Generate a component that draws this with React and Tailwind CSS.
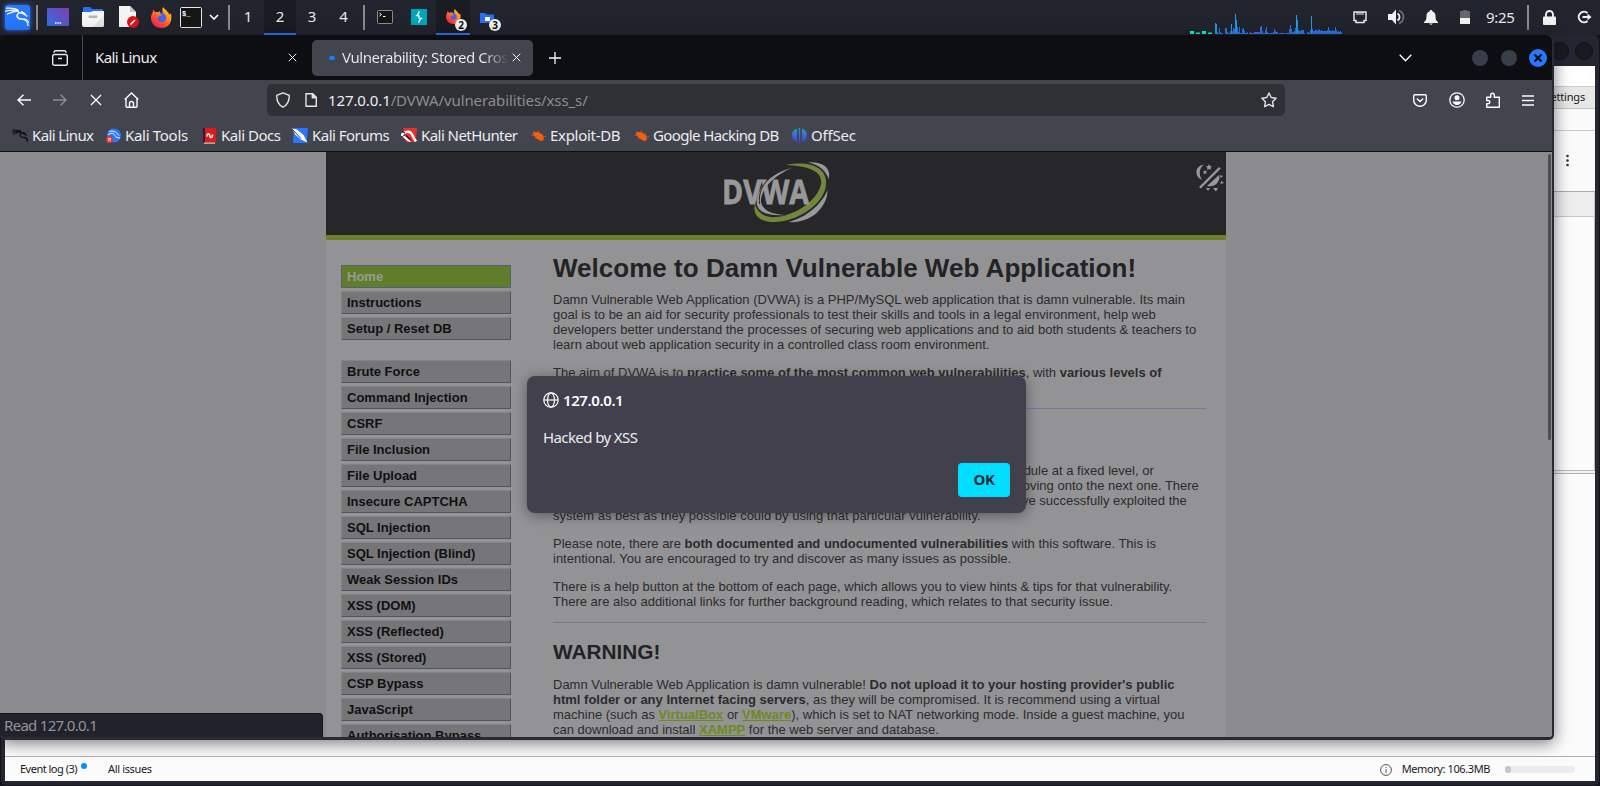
import React from "react";
import { SiBurpsuite, SiKalilinux } from "react-icons/si";

const NAV = [
  ["Home", "Instructions", "Setup / Reset DB"],
  ["Brute Force", "Command Injection", "CSRF", "File Inclusion", "File Upload", "Insecure CAPTCHA", "SQL Injection", "SQL Injection (Blind)", "Weak Session IDs", "XSS (DOM)", "XSS (Reflected)", "XSS (Stored)", "CSP Bypass", "JavaScript", "Authorisation Bypass"],
];

const GRAPH = [11,10,2,1,6,2,1,1,0,0,6,6,2,1,1,3,10,3,6,5,20,14,7,2,7,1,1,5,6,3,1,1,2,0,1,2,1,1,1,2,2,2,2,2,2,7,8,3,1,1,4,7,2,1,1,1,1,1,2,5,3,2,2,0,1,1,1,1,1,1,0,1,1,1,5,9,5,2,2,3,6,19,14,4,3,3,4,4,4,1,0,0,2,2,1,4,18,5,3,3,4,4,3,5,4,3,4,3,3,3,3,3,4,7,4,3,3,4,3,3,7,4,2,3,2,3,2];

function Firefox({ size }) {
  return (
    <svg width={size} height={size} viewBox="0 0 24 24">
      <defs>
        <linearGradient id="fx" x1="1" y1="0" x2="0.2" y2="1">
          <stop offset="0" stopColor="#ffe02e" />
          <stop offset="0.4" stopColor="#ff9322" />
          <stop offset="0.75" stopColor="#ff4338" />
          <stop offset="1" stopColor="#ee1d5c" />
        </linearGradient>
      </defs>
      <circle cx="12" cy="12.500" r="6.500" fill="#4a62e0" />
      <path fill="url(#fx)" d="M14 0c1 2 3 3.200 4.500 5C20 6 20.500 7 20.500 8.500C22 8 22.500 7 22.500 7C25 14 22 24 12 24C4 24 0 18 0 12.500C0 10 1 7 2 6L2.500 3L5 6C6.500 5.500 8 5.500 8.500 5.700L10.500 4.500L10 7.500L12.500 9.500C11 10 9 10 8 11.500C7 13 7 17 12 17.500C15.500 17.500 17.500 15 17.500 12C17.500 10 15.500 8 14 7C12.500 5 12.500 2 14 0Z" />
    </svg>
  );
}

function Sep() {
  return <div className="h-[25px] w-[2px] bg-[#8a8a8d]" />;
}

function TopPanel() {
  return (
    <div className="flex h-[35px] w-full shrink-0 items-center bg-[#22242d] pb-px font-['Noto_Sans',sans-serif] text-[15px] text-[#e6e6e6]">
      <div className="flex w-[36px] justify-center">
        <div className="ml-[-2px] flex h-[25px] w-[25px] items-center justify-center rounded-[3px] bg-[#2777ff] shadow-[0_0_5px_#2777ff]">
          <SiKalilinux className="h-6 w-6 stroke-current stroke-[0.8] text-white" />
        </div>
      </div>
      <Sep />
      <div className="flex w-[40px] justify-center">
        <svg width="22" height="18" viewBox="0 0 22 18">
          <defs><linearGradient id="dk" x1="0" y1="1" x2="1" y2="0"><stop offset="0" stopColor="#2f6fe8" /><stop offset="1" stopColor="#7f3fa8" /></linearGradient></defs>
          <rect width="22" height="18" rx="1" fill="url(#dk)" />
          <path d="M8 15h1.500M10.300 15h1.500M12.600 15h1.500" stroke="#fff" strokeWidth="1.300" />
        </svg>
      </div>
      <div className="flex w-[30px] justify-center">
        <svg width="22" height="20" viewBox="0 0 22 20">
          <path d="M1 1a1 1 0 0 1 1-1h6l2 2h10a1 1 0 0 1 1 1v5H1z" fill="#2b6ff0" />
          <path d="M0 5h9l2-1h11v14a2 2 0 0 1-2 2H2a2 2 0 0 1-2-2z" fill="#f4f4f4" />
          <path d="M22 8v10a2 2 0 0 1-2 2h-9z" fill="#e4e4e4" />
          <rect x="6.500" y="8.500" width="9" height="2.500" rx="1" fill="#b4b4b4" />
        </svg>
      </div>
      <div className="ml-[6px] flex w-[28px] justify-center">
        <svg width="21" height="22" viewBox="0 0 21 22">
          <path d="M1 0h11l6 6v15H1z" fill="#f4f4f4" /><path d="M12 0l6 6h-6z" fill="#c4c4c4" />
          <circle cx="15" cy="16" r="6" fill="#d9141b" /><path d="M12.500 18.500l4.500-4.500" stroke="#fff" strokeWidth="1.600" />
        </svg>
      </div>
      <div className="ml-[8px] flex w-[22px] justify-center"><Firefox size={21} /></div>
      <svg className="ml-[8px]" width="22" height="21" viewBox="0 0 22 21">
        <rect x="0.500" y="0.500" width="21" height="20" rx="1" fill="#161616" stroke="#e8e8e8" />
        <text x="2" y="9" fontSize="7" fontFamily="Liberation Mono, monospace" fontWeight="bold" fill="#fff">$_</text>
      </svg>
      <svg className="ml-[7px]" width="10" height="6" viewBox="0 0 10 6" fill="none" stroke="#fff" strokeWidth="1.700"><path d="M1 1l4 4 4-4" /></svg>
      <div className="ml-[9px]"><Sep /></div>
      <div className="mb-[-1px] ml-[2px] flex h-[35px] text-center leading-[32px]">
        <div className="w-[32px]">1</div>
        <div className="w-[32px] border-b-2 border-[#2777ff] bg-[#1a1c23]">2</div>
        <div className="w-[32px]">3</div>
        <div className="w-[31px]">4</div>
      </div>
      <div className="ml-[4px]"><Sep /></div>
      <svg className="ml-[12px]" width="16" height="14" viewBox="0 0 16 14">
        <rect x="0.500" y="0.500" width="15" height="13" rx="1" fill="#161616" stroke="#8d8d8d" />
        <path d="M2.500 3l2 1.500-2 1.500M6 6.500h2.500" stroke="#fff" fill="none" />
      </svg>
      <div className="ml-[18px] h-[16px] w-[16px] bg-white">
        <SiBurpsuite className="h-4 w-4 text-[#00a5bd]" />
      </div>
      <div className="relative mb-[-1px] ml-[9px] flex h-[35px] w-[34px] items-center border-b-2 border-[#2777ff] bg-[#1a1c23] pl-[10px]">
        <Firefox size={15} />
        <span className="absolute left-[19px] top-[19px] flex h-[12px] w-[12px] items-center justify-center rounded-full bg-[#f1f1f1] text-[10px] font-bold leading-none text-[#111]">2</span>
      </div>
      <div className="relative mb-[-1px] ml-[10px] flex h-[35px] w-[24px] items-center">
        <svg width="14" height="12" viewBox="0 0 14 12"><path d="M0 1h5l1.500 1.500H14V11H0z" fill="#2b6ff0" /><rect x="5" y="5" width="5" height="4" fill="#fff" /></svg>
        <span className="absolute left-[9px] top-[19px] flex h-[12px] w-[12px] items-center justify-center rounded-full bg-[#f1f1f1] text-[10px] font-bold leading-none text-[#111]">3</span>
      </div>
      <div className="flex-1" />
      <svg width="153" height="34" viewBox="0 0 153 34" shapeRendering="crispEdges">
        <path d="M0 31h4v3h-4zM6 33h4v1h-4zM12 31h4v3h-4zM18 33h4v1h-4z" fill="#00ffd5" />
        <path d="M6 32h4v1h-4zM18 32h4v1h-4z" fill="#118f84" />
        {GRAPH.map((h, i) => (
          <rect key={i} x={25 + i} y={34 - h} width="1" height={h} fill={h > 9 ? "#249ae8" : "#2a78f0"} />
        ))}
      </svg>
      <div className="ml-[10px] flex w-[247px] items-center">
        <svg width="14" height="13" viewBox="0 0 14 13" fill="none" stroke="#e8e8e8" strokeWidth="1.500">
          <path d="M1 1h12v8.500h-2v2H3v-2H1z" /><path d="M4 1v3M6 1v3M8 1v3M10 1v3" strokeWidth="1" />
        </svg>
        <svg className="ml-[21px]" width="17" height="16" viewBox="0 0 17 16" fill="none">
          <path d="M0 5h4l4-4.500v15L4 11H0z" fill="#f0f0f0" />
          <path d="M9.500 4.500a4 4 0 0 1 0 7" stroke="#f0f0f0" strokeWidth="1.800" />
          <path d="M11 1.500a7 7 0 0 1 0 13" stroke="#6c6d73" strokeWidth="1.800" />
        </svg>
        <svg className="ml-[19px]" width="14" height="15" viewBox="0 0 14 15" fill="#f0f0f0"><path d="M7 0c1 0 1.300.7 1.300 1.300C10.500 2 11.500 3.500 11.500 6c0 3 .5 5 2.500 6v1H0v-1c2-1 2.500-3 2.500-6 0-2.500 1-4 3.200-4.700C5.700.7 6 0 7 0zM5 13.500h4L7 15z" /></svg>
        <svg className="ml-[22px]" width="10" height="14" viewBox="0 0 10 14"><path d="M3 0h4v1h3v7H0V1h3z" fill="#66676d" /><path d="M0 8h10v6H0z" fill="#f0f0f0" /></svg>
        <span className="ml-[16px] w-[30px] whitespace-nowrap leading-none tracking-[-0.3px]">9:25</span>
        <div className="ml-[11px]"><Sep /></div>
        <svg className="ml-[14px]" width="13" height="15" viewBox="0 0 13 15"><path d="M3 7V4.500a3.500 3.500 0 0 1 7 0V7" fill="none" stroke="#f0f0f0" strokeWidth="1.900" /><rect y="6.500" width="13" height="8.500" rx="1" fill="#f0f0f0" /></svg>
        <svg className="ml-[21px]" width="15" height="14" viewBox="0 0 15 14" fill="none" stroke="#f0f0f0" strokeWidth="2"><path d="M10.500 3A5.300 5.300 0 1 0 10.500 11M5.500 7H12" /><path d="M10.500 3.500L14.500 7l-4 3.500z" fill="#f0f0f0" stroke="none" /></svg>
      </div>
    </div>
  );
}

function Cross({ size, w = 1.4 }) {
  return <svg width={size} height={size} viewBox="0 0 10 10" fill="none" stroke="#fbfbfe" strokeWidth={w}><path d="M0.800 0.800l8.400 8.400M9.200 0.800L0.800 9.200" /></svg>;
}

function TabBar() {
  return (
    <div className="flex h-[45px] shrink-0 items-center rounded-t-lg bg-[#0d0e12] text-[15px] text-[#ececef]">
      <div className="flex h-full w-[83px] items-center justify-end border-r border-[#4b4c52] pr-[14px]">
        <svg width="16" height="16" viewBox="0 0 16 16" fill="none" stroke="#e8e8ea" strokeWidth="1.400"><rect x="0.700" y="4.500" width="14.600" height="10.800" rx="1.800" /><path d="M2 2.700c0-1.300.7-2 1.700-2h8.600c1 0 1.700.7 1.700 2M6 8.500h4" /></svg>
      </div>
      <div className="flex w-[229px] items-center pl-[12px] pr-[15px] tracking-[-0.6px]">
        <span className="flex-1 whitespace-nowrap">Kali Linux</span>
        <Cross size={9} w={1.1} />
      </div>
      <div className="flex h-[36px] w-[221px] items-center rounded-[5px] bg-[#42454d] pl-[17px] pr-[12px]">
        <div className="h-[4px] w-[6px] rounded-full bg-[#0a84ff]" />
        <span className="ml-[7px] w-[167px] overflow-hidden whitespace-nowrap bg-linear-to-r from-[#ececef] from-85% to-[#42454d] to-100% bg-clip-text tracking-[-0.45px] text-transparent">Vulnerability: Stored Cross</span>
        <span className="ml-[3px]"><Cross size={9} w={1.1} /></span>
      </div>
      <svg className="ml-[16px]" width="12" height="12" viewBox="0 0 12 12" stroke="#fbfbfe" strokeWidth="1.300"><path d="M6 0v12M0 6h12" /></svg>
      <div className="flex-1" />
      <svg width="13" height="8" viewBox="0 0 13 8" fill="none" stroke="#fbfbfe" strokeWidth="1.300"><path d="M0.700 0.800l5.800 6 5.800-6" /></svg>
      <div className="ml-[60px] flex items-center gap-[13px] pr-[5px]">
        <div className="h-4 w-4 rounded-full bg-[#393e4b]" />
        <div className="h-4 w-4 rounded-full bg-[#393e4b]" />
        <div className="ml-[-1px] flex h-[18px] w-[18px] items-center justify-center rounded-full bg-[#2777ff]">
          <svg width="8" height="8" viewBox="0 0 8 8" stroke="#0d0e12" strokeWidth="2.200"><path d="M0.500 0.500l7 7M7.500 0.500l-7 7" /></svg>
        </div>
      </div>
    </div>
  );
}

function UrlBar() {
  return (
    <div className="flex h-[40px] items-center">
      <svg className="ml-[17px]" width="14" height="12" viewBox="0 0 14 12" fill="none" stroke="#fbfbfe" strokeWidth="1.400"><path d="M14 6H1M6.500 0.700L1 6l5.500 5.300" /></svg>
      <svg className="ml-[22px]" width="14" height="12" viewBox="0 0 14 12" fill="none" stroke="#8b8d92" strokeWidth="1.400"><path d="M0 6h13M7.500 0.700L13 6l-5.500 5.300" /></svg>
      <span className="ml-[23px]"><Cross size={12} w={1.1} /></span>
      <svg className="ml-[22px]" width="15" height="16" viewBox="0 0 15 16" fill="none" stroke="#fbfbfe" strokeWidth="1.400" strokeLinejoin="round"><path d="M0.700 7.500l6.800-6.600 6.800 6.600M2 6.500v7.700c0 .6.400 1 1 1h9c.6 0 1-.4 1-1V6.500M5.500 15v-3.500a2 2 0 0 1 4 0V15" /></svg>
      <div className="ml-[128px] flex h-[32px] w-[1018px] items-center rounded-[5px] bg-[#2f3035] text-[15px]">
        <svg className="ml-[9px]" width="14" height="16" viewBox="0 0 14 16" fill="none" stroke="#e4e4e8" strokeWidth="1.400"><path d="M7 0.800l6.300 2.500C13.300 9 12 13 7 15.200 2 13 0.700 9 0.700 3.300z" strokeLinejoin="round" /></svg>
        <svg className="ml-[15px]" width="12" height="14" viewBox="0 0 12 14" fill="none" stroke="#e4e4e8" strokeWidth="1.400"><path d="M1 0.700h6.500l3.800 3.800v8.800H1zM7.500 0.700v3.800h3.800" /><path d="M7.500 0.700v3.800h3.800z" fill="#e4e4e8" /></svg>
        <span className="ml-[11px] flex-1 whitespace-nowrap tracking-[-0.1px] text-[#ececef]">127.0.0.1<span className="text-[#8c8d91]">/DVWA/vulnerabilities/xss_s/</span></span>
        <svg className="mr-[8px]" width="16" height="16" viewBox="0 0 16 16" fill="none" stroke="#e4e4e8" strokeWidth="1.400" strokeLinejoin="round"><path d="M8 1l2.200 4.500 4.900.7-3.600 3.500.9 5L8 12.400l-4.400 2.300.9-5L0.900 6.200l4.900-.7z" /></svg>
      </div>
      <svg className="ml-[128px]" width="14" height="13" viewBox="0 0 14 13" fill="none" stroke="#fbfbfe" strokeWidth="1.400"><path d="M2 0.700h10a1.300 1.300 0 0 1 1.300 1.300v4a6.300 6.300 0 0 1-12.600 0V2A1.300 1.300 0 0 1 2 0.700zM3.800 4.500L7 7.500l3.200-3" /></svg>
      <svg className="ml-[22px]" width="16" height="16" viewBox="0 0 16 16" fill="none" stroke="#fbfbfe" strokeWidth="1.300"><circle cx="8" cy="8" r="7.200" /><circle cx="8" cy="5.800" r="2.500" fill="#fbfbfe" stroke="none" /><path d="M3.500 9.500h9A5 5 0 0 1 8 13a5 5 0 0 1-4.500-3.500z" fill="#fbfbfe" stroke="none" /></svg>
      <svg className="ml-[21px]" width="14" height="16" viewBox="0 0 14 16" fill="none" stroke="#fbfbfe" strokeWidth="1.400" strokeLinejoin="round"><path d="M0.700 5.200h4V3a1.800 1.800 0 0 1 3.600 0v2.200h5v10H0.700v-3.500h1.500a1.600 1.600 0 0 0 0-3.200H0.700z" /></svg>
      <svg className="ml-[22px]" width="12" height="11" viewBox="0 0 12 11" stroke="#fbfbfe" strokeWidth="1.300"><path d="M0 1h12M0 5.500h12M0 10h12" /></svg>
    </div>
  );
}

const Bug = () => (
  <svg width="15" height="13" viewBox="0 0 15 13"><path d="M1.500 4C4.500 2 8.500 3 11.500 6C13.500 8 13 12 11 12C8 11.500 3.500 9 1.500 4Z" fill="#f0600f" /><path d="M0 6.500h4M2 2l3 2M7 1l1 3M4 10l2-1.500M11 4l1 3M12 7.500h3" stroke="#c9622e" strokeWidth="0.600" /></svg>
);

const BOOKMARKS = [
  { w: 93, track: "tracking-[-0.62px]", label: "Kali Linux", icon: <SiKalilinux className="h-4 w-4 stroke-current stroke-[0.9] text-[#0b0b0c]" /> },
  { w: 96, track: "tracking-[-0.3px]", label: "Kali Tools", icon: <svg width="15" height="15" viewBox="0 0 15 15"><circle cx="8" cy="7.500" r="7" fill="#2777ff" /><path d="M3 3.500c4-1 7 0 10 4M2 6.500c4-2 6-1 7 1s2 2 5 2.500" stroke="#fff" fill="none" /><circle cx="3.500" cy="11.500" r="3.500" fill="#e8332f" /><path d="M2 10.500h3M2.800 10.500v3M4.300 10.500v3" stroke="#fff" strokeWidth="0.700" /></svg> },
  { w: 91, track: "tracking-[-0.48px]", label: "Kali Docs", icon: <svg width="13" height="16" viewBox="0 0 13 16"><rect width="13" height="14.500" fill="#dc1c1c" /><rect width="2" height="14.500" fill="#3a1538" /><path d="M1 14.500h11v1.300H1z" fill="#e9b8b8" /><path d="M4 8.500c0-2 1-3 2-2.500s.5 3 1.800 3.500S9.500 8 9.500 6.500" stroke="#fff" fill="none" strokeWidth="1.500" /></svg> },
  { w: 109, track: "tracking-[-0.52px]", label: "Kali Forums", icon: <svg width="16" height="15" viewBox="0 0 16 15"><path d="M2 0h14l-1.500 15H1z" fill="#2777ff" /><path d="M0 0.500L5 1.500L11.500 7L15.500 14.500L9 11.500L3.500 7Z" fill="#fff" /><path d="M0.500 1.500l8.500 9" stroke="#222" strokeWidth="0.900" /></svg> },
  { w: 129, track: "tracking-[-0.56px]", label: "Kali NetHunter", icon: <svg width="16" height="15" viewBox="0 0 16 15"><path d="M2 0h14l-1.500 14H5z" fill="#e5322f" /><path d="M0.500 8C2 3 9 2.500 11 6.500c1 2 2 4 4 7M2.500 9.500c2-1.500 3 3 7 3.500" stroke="#fff" strokeWidth="2.400" fill="none" /><path d="M1 3.500l3 1.500M5 7.500l5 5" stroke="#17171a" strokeWidth="1.200" /></svg> },
  { w: 103, track: "tracking-[-0.3px]", label: "Exploit-DB", icon: <Bug /> },
  { w: 158, track: "tracking-[-0.62px]", label: "Google Hacking DB", icon: <Bug /> },
  { w: 90, track: "tracking-[-0.2px]", label: "OffSec", icon: <svg width="15" height="15" viewBox="0 0 15 15"><defs><linearGradient id="os" x1="0" y1="0" x2="0" y2="1"><stop offset="0" stopColor="#17a5c4" /><stop offset="1" stopColor="#5a30dc" /></linearGradient></defs><path d="M5 0.500v13C2 13.500 0 10.500 0 7S2 1.500 5 0.500zM6.800 0h1.400v15H6.800zM10 0.500v13c3 0 5-3 5-6.500S13 1.500 10 0.500z" fill="url(#os)" /></svg> },
];

function Bookmarks() {
  return (
    <div className="flex h-[31px] items-center pl-[12px] text-[15px] text-[#ececef]">
      {BOOKMARKS.map((b) => (
        <div key={b.label} className="flex shrink-0 items-center gap-[4px]" style={{ width: b.w }}>
          <span className="flex w-4 shrink-0 justify-center">{b.icon}</span>
          <span className={"whitespace-nowrap " + b.track}>{b.label}</span>
        </div>
      ))}
    </div>
  );
}

function Logo() {
  return (
    <svg width="106" height="62" viewBox="0 0 106 62">
      <path d="M84 0.500C98 -1 108 6 104.500 17C102 9 96 3 84 0.500Z" fill="#98989a" />
      <path d="M62 3C88 -2 104 7 102 23C100 43 72 60 50 60C36 60 28 53 31 42C34 52 42 56 53 55C72 53 94 38 97 22C99 9 84 4 62 3Z" fill="#72863c" />
      <path d="M103.500 28C104 42 90 62 64 60C82 56 98 42 103.500 28Z" fill="#98989a" />
      <path d="M68 6C50 13 36 28 37 40C39 49 48 52 61 53C46 54 35 51 33 43C31 28 46 11 68 6Z" fill="#98989a" />
      <text x="-2" y="41.500" textLength="87" lengthAdjust="spacingAndGlyphs" fontFamily="Open Sans, sans-serif" fontWeight="700" fontSize="34" fill="#98989a" stroke="#98989a" strokeWidth="0.800">DVWA</text>
      <path d="M43 18.500C37.500 25 34.500 32 35.500 42" fill="none" stroke="#272729" strokeWidth="1" />
    </svg>
  );
}

function ThemeIcon() {
  return (
    <svg width="28" height="28" viewBox="0 0 28 28" fill="#98989a">
      <path d="M8 0.500C3 1.500 0 4.500 0.500 9C1 13 3.500 15 6 15.500C2.500 11 3 4 8 0.500Z" />
      <path d="M13 0l1 2 2 .3-1.500 1.500.3 2.200L13 5l-1.900 1 .3-2.200L10 2.300l2-.3zM9 6l.7 1.300 1.600.2-1.200 1.200.3 1.600L9 9.500l-1.400.8.3-1.600L6.700 7.500l1.600-.2z" />
      <path d="M3 23L23 3l1.800 1.500-20 20z" />
      <path d="M11 22L23 11C25 16 20 24 11 22ZM24 11l3 1-2.500 2zM25 17l3 2-3.500 1zM22 22l1 1M17 24h5l-2 3.500zM10 24h4l-2 3z" />
    </svg>
  );
}

const H2 = ({ children }) => <h2 className="mb-[13px] mt-[17px] text-[20.800px] font-bold leading-[24px] text-[#232325]">{children}</h2>;
const P = ({ children }) => <p className="mb-[13px] whitespace-nowrap">{children}</p>;
const A = ({ children }) => <b className="text-[#6d8a22] underline">{children}</b>;

function Page() {
  return (
    <div className="flex h-[585px] justify-center overflow-hidden bg-[#8c8c8e] font-['Liberation_Sans',Arial,sans-serif] text-[13px] leading-[15px] text-[#2b2b2d]">
      <div className="mr-[1px] flex w-[900px] flex-col bg-[#939395]">
        <header className="flex h-[88px] shrink-0 border-b-[5px] border-[#6b8029] bg-[#272729]">
          <div className="w-[398px]" />
          <div className="pt-[10px]"><Logo /></div>
          <div className="flex-1" />
          <div className="pr-[2px] pt-[12px]"><ThemeIcon /></div>
        </header>
        <div className="flex pl-[15px]">
          <nav className="flex w-[170px] shrink-0 flex-col gap-[20px] pt-[25px]">
            {NAV.map((group, gi) => (
              <ul key={gi} className="flex flex-col gap-[3px]">
                {group.map((item) => (
                  <li
                    key={item}
                    className={
                      "h-[23px] border pl-[5.500px] text-[13px] font-bold leading-[21px] " +
                      (item === "Home" ? "border-[#566074] bg-[#607d2b] text-[#9a9b94]" : "border-b-[#4d5464] border-l-[#838386] border-r-[#4d5464] border-t-[#838386] bg-[#767678] text-[#101012]")
                    }
                  >
                    {item}
                  </li>
                ))}
              </ul>
            ))}
          </nav>
          <main className="ml-[42.500px] w-[652.500px] pt-[13px]">
            <h1 className="mb-[9px] whitespace-nowrap text-[26px] font-bold leading-[30px] tracking-[0.02px] text-[#232325]">Welcome to Damn Vulnerable Web Application!</h1>
            <P>
              Damn Vulnerable Web Application (DVWA) is a PHP/MySQL web application that is damn vulnerable. Its main<br />
              goal is to be an aid for security professionals to test their skills and tools in a legal environment, help web<br />
              developers better understand the processes of securing web applications and to aid both students &amp; teachers to<br />
              learn about web application security in a controlled class room environment.
            </P>
            <P>
              The aim of DVWA is to <b>practice some of the most common web vulnerabilities</b>, with <b>various levels of<br />
              difficulty</b>, with a simple straightforward interface.
            </P>
            <hr className="border-[#6d7b9c]" />
            <H2>General Instructions</H2>
            <P>
              It is up to the user how they approach DVWA. Either by working through every module at a fixed level, or<br />
              selecting any module and working up to reach the highest level they can before moving onto the next one. There<br />
              is not a fixed object to complete a module; however users should feel that they have successfully exploited the<br />
              system as best as they possible could by using that particular vulnerability.
            </P>
            <P>
              Please note, there are <b>both documented and undocumented vulnerabilities</b> with this software. This is<br />
              intentional. You are encouraged to try and discover as many issues as possible.
            </P>
            <P>
              There is a help button at the bottom of each page, which allows you to view hints &amp; tips for that vulnerability.<br />
              There are also additional links for further background reading, which relates to that security issue.
            </P>
            <hr className="border-[#737a8a]" />
            <H2>WARNING!</H2>
            <P>
              Damn Vulnerable Web Application is damn vulnerable! <b>Do not upload it to your hosting provider's public<br />
              html folder or any Internet facing servers</b>, as they will be compromised. It is recommend using a virtual<br />
              machine (such as <A>VirtualBox</A> or <A>VMware</A>), which is set to NAT networking mode. Inside a guest machine, you<br />
              can download and install <A>XAMPP</A> for the web server and database.
            </P>
          </main>
        </div>
      </div>
    </div>
  );
}

function AlertDialog() {
  return (
    <div className="absolute left-[527px] top-[341px] flex h-[137px] w-[499px] flex-col rounded-[8px] bg-[#42404d] px-[16px] pt-[15px] text-[15px] text-[#fbfbfe] shadow-[0_2px_14px_rgba(0,0,0,0.4)]">
      <div className="flex h-[18px] items-center gap-[4px] font-semibold">
        <svg width="16" height="16" viewBox="0 0 16 16" fill="none" stroke="#fbfbfe" strokeWidth="1.200"><circle cx="8" cy="8" r="7.200" /><ellipse cx="8" cy="8" rx="3.500" ry="7.200" /><path d="M1 8h14" /></svg>
        <span className="tracking-[-0.4px]">127.0.0.1</span>
      </div>
      <div className="mt-[18px] leading-[20px] tracking-[-0.6px] text-[#ececef]">Hacked by XSS</div>
      <div className="mt-[16px] flex justify-end">
        <button className="h-[34px] w-[52px] rounded-[4px] bg-[#00ddff] pb-px font-bold tracking-[-0.4px] text-[#2b2a33]">OK</button>
      </div>
    </div>
  );
}

function BrowserWindow() {
  return (
    <div className="absolute left-0 top-0 flex h-[705px] w-[1554px] flex-col overflow-hidden rounded-b-[5px] rounded-t-lg border-b-[3px] border-r-[2px] border-[#292a35] bg-[#0d0e12] font-['Noto_Sans',sans-serif]">
      <TabBar />
      <div className="flex h-[72px] shrink-0 flex-col border-b border-[#0f1013] bg-[#42454d]">
        <UrlBar />
        <Bookmarks />
      </div>
      <Page />
      <div className="absolute right-px top-[119px] h-[286px] w-[3px] rounded-full bg-[#4e4e50]" />
      <div className="absolute bottom-0 left-0 flex h-[24px] w-[323px] items-center rounded-tr-[4px] border-r border-t border-[#15161b] bg-[#22222b] pl-[4px] text-[15px] tracking-[-0.7px] text-[#939397]">Read 127.0.0.1</div>
      <AlertDialog />
    </div>
  );
}

function ProxyWindow() {
  return (
    <div className="absolute left-px top-0 flex h-[750px] w-[1598px] flex-col rounded-[6px] bg-[#242732] pb-[4px] pl-[4px] pr-[4px] font-['Noto_Sans',sans-serif] text-[11px] text-[#1a1a1a]">
      <div className="flex h-[31px] items-center justify-end gap-[6px] pr-[2px]">
        <div className="h-[18px] w-[18px] rounded-full border border-[#101116] bg-[#1a1b21]" />
        <div className="h-[18px] w-[18px] rounded-full border border-[#101116] bg-[#1a1b21]" />
      </div>
      <div className="h-[21px] border-b border-[#cfcfcf] bg-white" />
      <div className="flex h-[22px] items-center justify-end border-b border-[#c4c4c4] bg-[#e7e7e7] pr-[10px] text-[11px] tracking-[-0.2px]">Settings</div>
      <div className="h-[22px] border-b border-[#c9cccc] bg-[#fafafa]" />
      <div className="flex h-[61px] items-center justify-end border-b border-[#ababab] bg-[#fafafa] pb-[2px] pr-[26px]">
        <svg width="3" height="13" viewBox="0 0 3 13" fill="#333"><circle cx="1.500" cy="2" r="1.300" /><circle cx="1.500" cy="6.500" r="1.300" /><circle cx="1.500" cy="11" r="1.300" /></svg>
      </div>
      <div className="h-[25px] border-b border-r border-[#c6c6c6] bg-[#ededed]" />
      <div className="h-[254px] border-b border-r border-[#bdb8bc] bg-[#fbfbfb]" />
      <div className="h-[3px] border-b border-[#b5b0b4] bg-[#f4f4f4]" />
      <div className="flex-1 border-b border-[#b5b0b4] bg-[#fbfbfb]" />
      <div className="flex h-[24px] items-center bg-[#fbfbfb] pl-[15px] pt-px">
        <span className="w-[58px] whitespace-nowrap tracking-[-0.5px]">Event log (3)</span>
        <span className="mb-[8px] ml-[3px] h-[6px] w-[6px] rounded-full bg-[#0090ff]" />
        <span className="ml-[21px] whitespace-nowrap tracking-[-0.35px]">All issues</span>
        <div className="flex-1" />
        <svg width="12" height="12" viewBox="0 0 12 12" fill="none" stroke="#555"><circle cx="6" cy="6" r="5.400" /><path d="M6 5v4M6 3v1" /></svg>
        <span className="ml-[10px] whitespace-nowrap tracking-[-0.4px]">Memory: 106.3MB</span>
        <div className="ml-[15px] mr-[20px] h-[7px] w-[70px] rounded-full bg-[#ececec]"><div className="h-[7px] w-[6px] rounded-full bg-[#c6c6c6]" /></div>
      </div>
    </div>
  );
}

export default function App() {
  return (
    <div className="flex h-[786px] w-[1600px] flex-col overflow-hidden bg-[#14151a]">
      <TopPanel />
      <div className="relative flex-1">
        <ProxyWindow />
        <div className="absolute left-0 top-0 h-[705px] w-[1554px] rounded-[5px] shadow-[0_3px_16px_rgba(20,10,20,0.55)]" />
        <BrowserWindow />
      </div>
    </div>
  );
}
